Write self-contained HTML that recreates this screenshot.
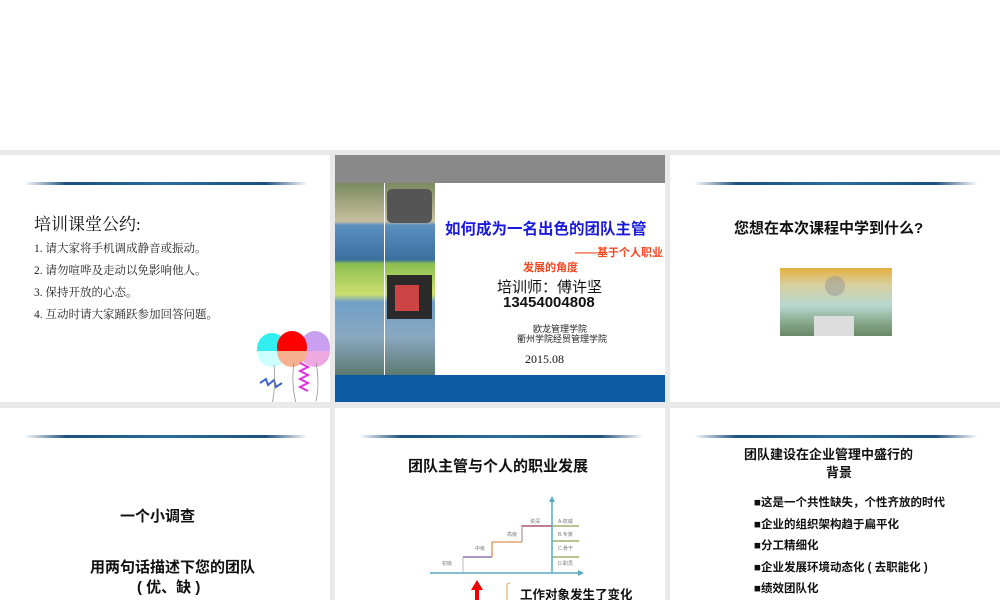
<!DOCTYPE html>
<html><head><meta charset="utf-8"><style>
*{margin:0;padding:0;box-sizing:border-box}
body{width:1000px;height:600px;background:#fff;position:relative;overflow:hidden;font-family:"Liberation Sans","Noto Sans CJK SC",sans-serif}
.bg{position:absolute;left:0;top:150px;width:1000px;height:450px;background:#e9e9e9}
.s{position:absolute;background:#fff;overflow:hidden}
.ln{position:absolute;height:3px;background:linear-gradient(90deg,rgba(20,60,100,0),#1d4f7c 15%,#2a6d9e 50%,#1d4f7c 85%,rgba(20,60,100,0));border-radius:2px}
.t{position:absolute;white-space:nowrap}
.serif{font-family:"Liberation Serif","Noto Serif CJK SC",serif}
</style></head><body>
<div class="bg"></div>

<!-- slide 1 -->
<div class="s" style="left:0;top:155px;width:330px;height:247px">
  <div class="ln" style="left:24px;top:27px;width:284px"></div>
  <div class="t serif" style="left:34px;top:55px;font-size:17px;color:#111">培训课堂公约:</div>
  <div class="t serif" style="left:34px;top:83px;font-size:11.5px;line-height:22px;color:#222">1. 请大家将手机调成静音或振动。<br>2. 请勿喧哗及走动以免影响他人。<br>3. 保持开放的心态。<br>4. 互动时请大家踊跃参加回答问题。</div>
  <svg style="position:absolute;left:252px;top:30px" width="80" height="220" viewBox="0 0 80 220">
    <ellipse cx="20" cy="164" rx="15" ry="16" fill="#3ee"/><path d="M5 166 A15 16 0 0 0 35 166Z" fill="#cff"/>
    <ellipse cx="63" cy="162" rx="15" ry="16" fill="#c9a0f0"/><path d="M48 166 A15 16 0 0 0 78 166Z" fill="#f0a8e0"/>
    <ellipse cx="40" cy="162" rx="15" ry="16" fill="#f00"/><path d="M25 166 A15 16 0 0 0 55 166Z" fill="#f6b090"/>
    <path d="M8 198 l6-4 2 6 6-5 2 7 6-4" stroke="#46c" stroke-width="2" fill="none"/>
    <path d="M48 178 l8 4-8 4 8 4-8 4 8 4-8 4 8 4" stroke="#d3d" stroke-width="2" fill="none"/>
    <path d="M22 180 q2 20 -2 40 M42 178 q-3 20 2 40 M64 178 q4 20 0 38" stroke="#888" stroke-width="0.7" fill="none"/>
  </svg>
</div>

<!-- slide 2 -->
<div class="s" style="left:335px;top:155px;width:330px;height:247px">
  <div style="position:absolute;left:0;top:0;width:330px;height:28px;background:#898989"></div>
  <div style="position:absolute;left:0;top:28px;width:100px;height:192px;background:linear-gradient(180deg,#7a8a60 0,#c8c0a0 20%,#5b8fc0 22%,#3a6f9e 40%,#8bbf50 42%,#cde070 58%,#6fa0c8 62%,#8aa8c0 80%,#5c7a70 100%)"></div>
  <div style="position:absolute;left:49px;top:28px;width:1px;height:192px;background:#fff"></div>
  <div style="position:absolute;left:52px;top:34px;width:45px;height:34px;background:#555;border-radius:5px"></div>
  <div style="position:absolute;left:52px;top:120px;width:45px;height:44px;background:#2a2a2a"></div>
  <div style="position:absolute;left:60px;top:130px;width:24px;height:26px;background:#c44"></div>
  <div style="position:absolute;left:0;top:220px;width:330px;height:27px;background:#0d5ba3"></div>
  <div class="t" style="left:110px;top:62px;font-size:15.5px;font-weight:bold;color:#1a1adc">如何成为一名出色的团队主管</div>
  <div class="t" style="left:240px;top:89px;font-size:11px;font-weight:bold;color:#f04a20">——基于个人职业</div>
  <div class="t" style="left:188px;top:104px;font-size:11px;font-weight:bold;color:#f04a20">发展的角度</div>
  <div class="t" style="left:162px;top:121px;font-size:15px;color:#111">培训师：傅许坚</div>
  <div class="t" style="left:168px;top:139px;font-size:15px;font-weight:bold;color:#111">13454004808</div>
  <div class="t" style="left:198px;top:167px;font-size:9px;color:#222">欧龙管理学院</div>
  <div class="t" style="left:182px;top:177px;font-size:9px;color:#222">衢州学院经贸管理学院</div>
  <div class="t serif" style="left:190px;top:197px;font-size:12px;color:#111">2015.08</div>
</div>

<!-- slide 3 -->
<div class="s" style="left:670px;top:155px;width:330px;height:247px">
  <div class="ln" style="left:24px;top:27px;width:284px"></div>
  <div class="t" style="left:64px;top:62px;font-size:15px;font-weight:bold;color:#111">您想在本次课程中学到什么?</div>
  <div style="position:absolute;left:110px;top:113px;width:112px;height:68px;background:linear-gradient(180deg,#e3b040 0,#d8d0a0 25%,#b8d8d0 55%,#7ea080 85%,#6a8868 100%)">
    <div style="position:absolute;left:45px;top:8px;width:20px;height:20px;border-radius:50%;background:rgba(150,150,150,.5)"></div>
    <div style="position:absolute;left:34px;top:48px;width:40px;height:20px;background:#ddd"></div>
  </div>
</div>

<!-- slide 4 -->
<div class="s" style="left:0;top:408px;width:330px;height:192px">
  <div class="ln" style="left:24px;top:27px;width:284px"></div>
  <div class="t" style="left:120px;top:97px;font-size:15px;font-weight:bold;color:#111">一个小调查</div>
  <div class="t" style="left:90px;top:148px;font-size:15px;font-weight:bold;color:#111">用两句话描述下您的团队</div>
  <div class="t" style="left:137px;top:168px;font-size:15px;font-weight:bold;color:#111">( 优、缺 )</div>
</div>

<!-- slide 5 -->
<div class="s" style="left:335px;top:408px;width:330px;height:192px">
  <div class="ln" style="left:24px;top:27px;width:284px"></div>
  <div class="t" style="left:73px;top:47px;font-size:15px;font-weight:bold;color:#111">团队主管与个人的职业发展</div>
  <svg style="position:absolute;left:0;top:0" width="330" height="192">
    <path d="M128 165 V149" stroke="#bbb" stroke-width="1"/>
    <path d="M128 149 H157" stroke="#7a5a9a" stroke-width="1.3"/>
    <path d="M157 149 V134 H187" stroke="#e09050" stroke-width="1.3" fill="none"/>
    <path d="M187 134 V118 H217" stroke="#a03050" stroke-width="1.3" fill="none"/>
    <path d="M187 134 V118" stroke="#bbb" stroke-width="1"/>
    <path d="M217 118 H244 M217 133 H244 M217 149 H244" stroke="#8aa050" stroke-width="1.3"/>
    <path d="M95 165 H243" stroke="#5aa8c0" stroke-width="1.5"/>
    <path d="M249 165 l-6 -3 v6z" fill="#5aa8c0"/>
    <path d="M217 165 V92" stroke="#5aa8c0" stroke-width="1.5"/>
    <path d="M217 88 l-3 6 h6z" fill="#5aa8c0"/>
    <g font-size="5" fill="#777" font-family="Liberation Sans,Noto Sans CJK SC,sans-serif">
      <text x="107" y="157">初级</text>
      <text x="140" y="142">中级</text>
      <text x="172" y="128">高级</text>
      <text x="195" y="115">资深</text>
      <text x="223" y="115">A.权威</text>
      <text x="223" y="128">B.专家</text>
      <text x="223" y="142">C.骨干</text>
      <text x="223" y="157">D.职员</text>
    </g>
    <path d="M140 192 V182 h-4 l6-10 6 10 h-4 V192z" fill="#e00"/>
    <path d="M172 192 V178 q0-3 3-3" stroke="#e8a040" stroke-width="1" fill="none"/>
  </svg>
  <div class="t" style="left:185px;top:176px;font-size:12.5px;font-weight:bold;color:#111">工作对象发生了变化</div>
</div>

<!-- slide 6 -->
<div class="s" style="left:670px;top:408px;width:330px;height:192px">
  <div class="ln" style="left:24px;top:27px;width:284px"></div>
  <div class="t" style="left:74px;top:36px;font-size:13px;font-weight:bold;color:#111">团队建设在企业管理中盛行的</div>
  <div class="t" style="left:156px;top:54px;font-size:13px;font-weight:bold;color:#111">背景</div>
  <div class="t" style="left:84px;top:85px;font-size:11.5px;line-height:21.5px;font-weight:bold;color:#111">■这是一个共性缺失，个性齐放的时代<br>■企业的组织架构趋于扁平化<br>■分工精细化<br>■企业发展环境动态化 ( 去职能化 )<br>■绩效团队化</div>
</div>
</body></html>
